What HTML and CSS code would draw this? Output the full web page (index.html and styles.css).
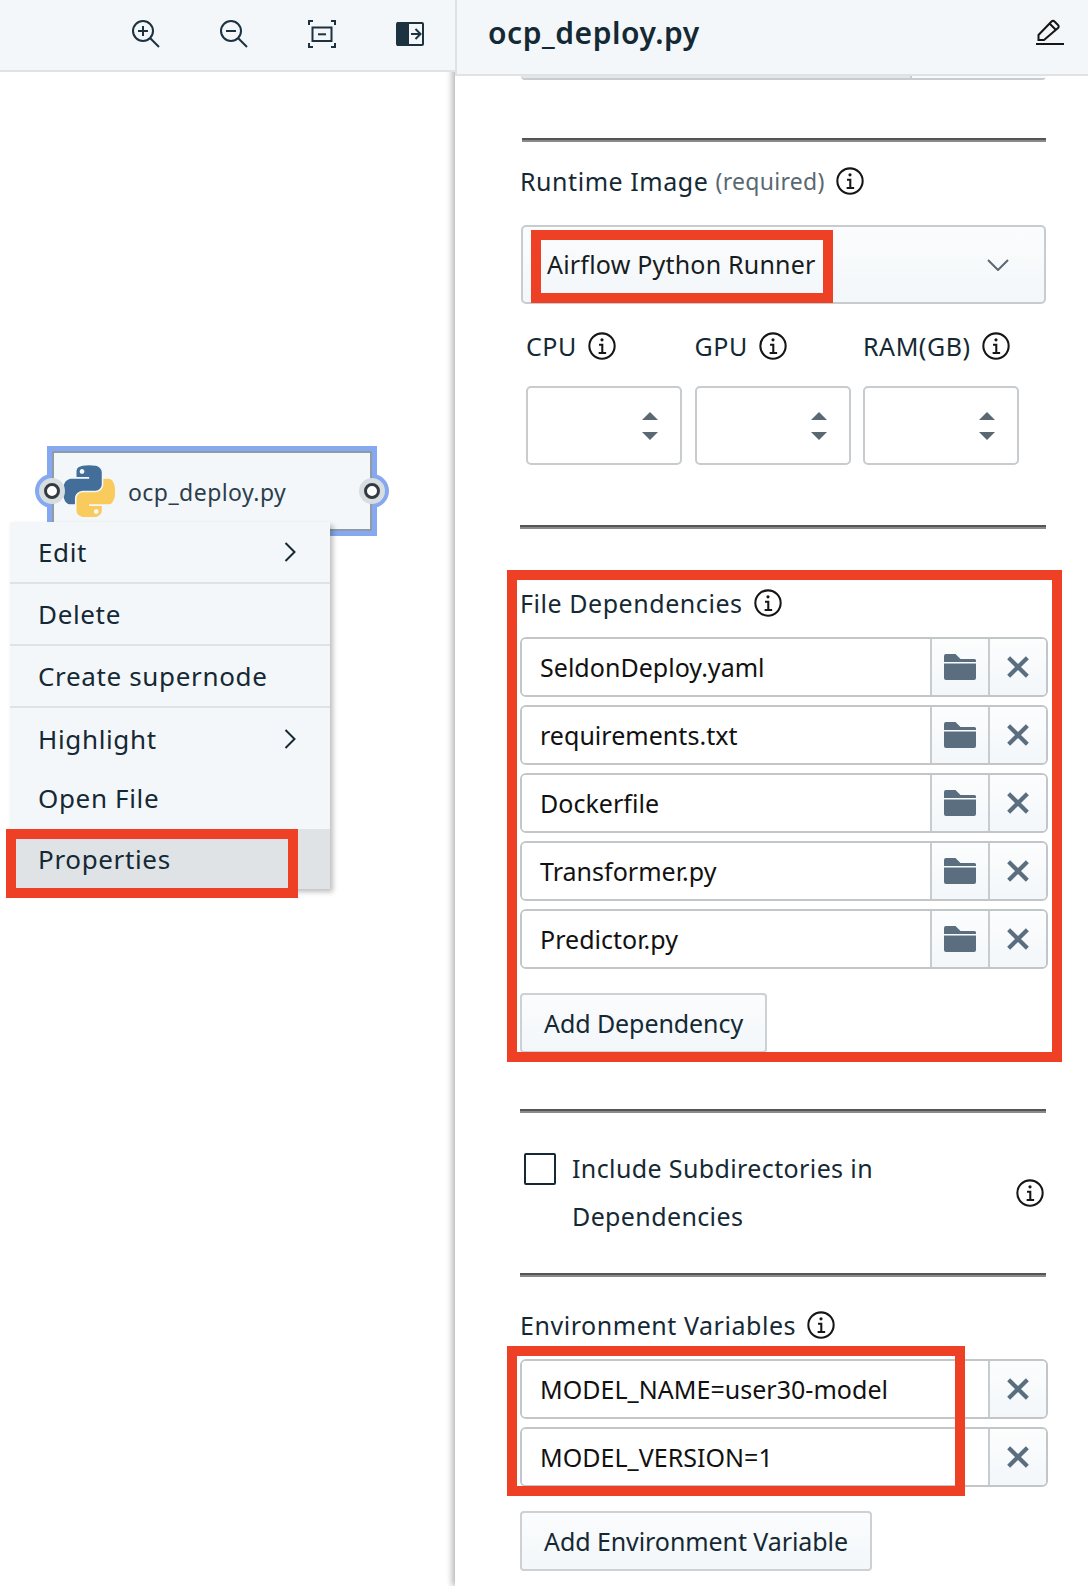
FILE: index.html
```html
<!DOCTYPE html>
<html lang="en">
<head>
<meta charset="utf-8">
<title>ocp_deploy.py</title>
<link rel="stylesheet" href="styles.css">
</head>
<body>
<svg class="defs" width="0" height="0" aria-hidden="true">
  <symbol id="info" viewBox="0 0 16 16">
    <path d="M8.700 11.200V6.800H6.400v1h1.200v3.400H6.200v1h4v-1z"/>
    <circle cx="8" cy="4.700" r=".85"/>
    <path fill-rule="evenodd" d="M8 15.300A7.300 7.300 0 1 1 8 .7a7.300 7.300 0 0 1 0 14.600zM8 1.800a6.200 6.200 0 1 0 0 12.400A6.200 6.200 0 0 0 8 1.800z"/>
  </symbol>
  <symbol id="folder" viewBox="0 0 32 26">
    <path d="M0 2a2 2 0 0 1 2-2h9.500l5 5H30.500A1.500 1.500 0 0 1 32 6.500V8H0z"/>
    <path d="M0 9.500h32V24a2 2 0 0 1-2 2H2a2 2 0 0 1-2-2z"/>
  </symbol>
  <symbol id="close" viewBox="0 0 20 20">
    <path d="M1.500 1.500l17 17M18.500 1.500l-17 17" fill="none" stroke="currentColor" stroke-width="3.800"/>
  </symbol>
  <symbol id="spin" viewBox="0 0 16 28">
    <path d="M8 0l8 8H0zM0 20h16l-8 8z"/>
  </symbol>
  <symbol id="chev-right" viewBox="0 0 12 20">
    <path d="M1.500 1l9 9-9 9" fill="none" stroke="currentColor" stroke-width="2"/>
  </symbol>
</svg>

<div class="app">
  <section class="left">
    <header class="toolbar">
      <svg class="tool" viewBox="0 0 28 28"><circle cx="11" cy="11" r="10"/><path d="M18.500 18.500l8.500 8.500M11 6v10M6 11h10"/></svg>
      <svg class="tool" viewBox="0 0 28 28"><circle cx="11" cy="11" r="10"/><path d="M18.500 18.500l8.500 8.500M6 11h10"/></svg>
      <svg class="tool" viewBox="0 0 28 28"><path d="M1 5V1h4M23 1h4v4M27 23v4h-4M5 27H1v-4"/><rect x="4.500" y="7.500" width="19" height="13.500"/><path d="M10 14.300h8"/></svg>
      <svg class="tool" viewBox="0 0 28 28"><rect class="solid" x="1" y="2" width="12" height="24" rx="1"/><rect x="1" y="3" width="26" height="22" rx="1"/><path d="M15 14h9M19.500 9l5 5-5 5"/></svg>
    </header>
    <div class="canvas">
      <span class="halo halo-left"></span>
      <span class="halo halo-right"></span>
      <div class="node">
        <svg class="python" viewBox="0 0 110.400 109.800">
          <path fill="#436e9a" d="M54.919.001c-4.584.022-8.961.413-12.813 1.095C30.760 3.100 28.700 7.295 28.700 15.032v10.219h26.813v3.406H18.638c-7.793 0-14.616 4.684-16.750 13.594-2.462 10.213-2.571 16.586 0 27.250 1.906 7.938 6.457 13.594 14.250 13.594h9.219v-12.250c0-8.850 7.657-16.656 16.750-16.656h26.781c7.454 0 13.406-6.138 13.406-13.625V15.032c0-7.266-6.130-12.725-13.406-13.937C64.282.328 59.502-.020 54.919.001zM40.419 8.220c2.770 0 5.031 2.299 5.031 5.125 0 2.816-2.262 5.094-5.031 5.094-2.780 0-5.031-2.278-5.031-5.094 0-2.826 2.251-5.125 5.031-5.125z"/>
          <path fill="#f9cb5c" d="M85.638 28.657v11.906c0 9.231-7.826 17-16.750 17H42.106c-7.336 0-13.406 6.278-13.406 13.625v25.531c0 7.266 6.319 11.540 13.406 13.625 8.487 2.496 16.626 2.947 26.781 0 6.750-1.954 13.406-5.888 13.406-13.625V86.501H55.513v-3.406h40.187c7.793 0 10.696-5.436 13.406-13.594 2.799-8.399 2.680-16.476 0-27.250-1.926-7.757-5.604-13.594-13.406-13.594zM70.575 93.313c2.780 0 5.031 2.278 5.031 5.094 0 2.826-2.251 5.125-5.031 5.125-2.770 0-5.031-2.299-5.031-5.125 0-2.816 2.262-5.094 5.031-5.094z"/>
        </svg>
        <span class="node-name">ocp_deploy.py</span>
      </div>
      <span class="ring ring-left"></span>
      <span class="ring ring-right"></span>
      <nav class="menu">
        <div class="menu-item sep">Edit<svg class="chev"><use href="#chev-right"/></svg></div>
        <div class="menu-item sep">Delete</div>
        <div class="menu-item sep">Create supernode</div>
        <div class="menu-item item-highlight">Highlight<svg class="chev"><use href="#chev-right"/></svg></div>
        <div class="menu-item item-open">Open File</div>
        <div class="menu-item active">Properties</div>
        <span class="menu-callout"></span>
      </nav>
    </div>
  </section>

  <aside class="panel">
    <header class="panel-head">
      <h1 class="panel-title">ocp_deploy.py</h1>
      <svg class="pencil" viewBox="0 0 28 26"><path d="M2.500 21v-5L15.500 2.500a2 2 0 0 1 3 0L22 6a2 2 0 0 1 0 3L8 21z"/><path d="M13.500 4.500l6.500 6.500M0 25h28"/></svg>
    </header>
    <div class="panel-body">
      <div class="clipped-row"><span class="clipped-end"></span></div>
      <hr class="rule rule-first">

      <div class="label label-runtime">Runtime Image <span class="muted">(required)</span><svg class="info"><use href="#info"/></svg></div>
      <div class="select">
        <span class="select-value">Airflow Python Runner</span>
        <svg class="select-chev" viewBox="0 0 22 12"><path d="M1 1l10 10L21 1"/></svg>
      </div>

      <div class="resources">
        <div class="resource">
          <div class="label">CPU<svg class="info"><use href="#info"/></svg></div>
          <div class="number"><svg class="spin"><use href="#spin"/></svg></div>
        </div>
        <div class="resource">
          <div class="label">GPU<svg class="info"><use href="#info"/></svg></div>
          <div class="number"><svg class="spin"><use href="#spin"/></svg></div>
        </div>
        <div class="resource">
          <div class="label">RAM(GB)<svg class="info"><use href="#info"/></svg></div>
          <div class="number"><svg class="spin"><use href="#spin"/></svg></div>
        </div>
      </div>

      <hr class="rule rule-second">

      <div class="deps">
        <div class="label label-deps">File Dependencies<svg class="info"><use href="#info"/></svg></div>
        <div class="rows">
          <div class="row"><span class="value">SeldonDeploy.yaml</span><span class="cell"><svg class="folder"><use href="#folder"/></svg></span><span class="cell"><svg class="x"><use href="#close"/></svg></span></div>
          <div class="row"><span class="value">requirements.txt</span><span class="cell"><svg class="folder"><use href="#folder"/></svg></span><span class="cell"><svg class="x"><use href="#close"/></svg></span></div>
          <div class="row"><span class="value">Dockerfile</span><span class="cell"><svg class="folder"><use href="#folder"/></svg></span><span class="cell"><svg class="x"><use href="#close"/></svg></span></div>
          <div class="row"><span class="value">Transformer.py</span><span class="cell"><svg class="folder"><use href="#folder"/></svg></span><span class="cell"><svg class="x"><use href="#close"/></svg></span></div>
          <div class="row"><span class="value">Predictor.py</span><span class="cell"><svg class="folder"><use href="#folder"/></svg></span><span class="cell"><svg class="x"><use href="#close"/></svg></span></div>
        </div>
        <div class="button button-deps">Add Dependency</div>
        <span class="deps-callout"></span>
      </div>

      <hr class="rule rule-third">

      <div class="check">
        <span class="box"></span>
        <span class="check-text">Include Subdirectories in Dependencies</span>
        <svg class="info"><use href="#info"/></svg>
      </div>

      <hr class="rule rule-fourth">

      <div class="label label-env">Environment Variables<svg class="info"><use href="#info"/></svg></div>
      <div class="rows rows-env">
        <div class="row"><span class="value">MODEL_NAME=user30-model</span><span class="cell"><svg class="x"><use href="#close"/></svg></span></div>
        <div class="row"><span class="value">MODEL_VERSION=1</span><span class="cell"><svg class="x"><use href="#close"/></svg></span></div>
        <span class="env-callout"></span>
      </div>
      <div class="button button-env">Add Environment Variable</div>
    </div>
  </aside>
</div>
</body>
</html>
```
FILE: styles.css
```css
* { box-sizing: border-box; }

html, body {
  margin: 0;
  padding: 0;
  height: 1586px;
  overflow: hidden;
  background: #fff;
}

body {
  font-family: "Noto Sans", "Open Sans", sans-serif;
  font-size: 25px;
  color: #152935;
}

.defs { position: absolute; }

.app {
  display: grid;
  grid-template-columns: 455px 633px;
  height: 1586px;
}

/* left: toolbar and canvas */
.left { display: flex; flex-direction: column; min-width: 0; }

.toolbar {
  position: relative;
  z-index: 2;
  height: 72px;
  flex: none;
  padding: 0 31px 2px 0;
  display: flex;
  justify-content: flex-end;
  align-items: center;
  gap: 60px;
  background: #f3f7fa;
  border-bottom: 2px solid #dfe3e6;
}

.tool {
  width: 28px;
  height: 28px;
  fill: none;
  stroke: #1d3240;
  stroke-width: 2;
}

.tool .solid { fill: #1d3240; stroke: none; }

.canvas { position: relative; flex: 1; background: #fff; }

.halo {
  position: absolute;
  top: 402px;
  width: 34px;
  height: 34px;
  border-radius: 50%;
  background: #85a8f0;
}

.halo-left { left: 35px; }
.halo-right { left: 355px; }

.node {
  position: absolute;
  left: 47px;
  top: 374px;
  width: 330px;
  height: 90px;
  padding: 14px 0 0 11px;
  display: flex;
  align-items: flex-start;
  gap: 13px;
  background: #f3f7fa;
  border: 5px solid #85a8f0;
  outline: 2px solid #8f9ca5;
  outline-offset: -7px;
}

.python { width: 52px; height: 52px; flex: none; }

.node-name {
  font-size: 23px;
  line-height: 32px;
  margin-top: 11px;
  letter-spacing: .45px;
  color: #2c3e4c;
}

.ring {
  position: absolute;
  top: 411px;
  width: 16px;
  height: 16px;
  border-radius: 50%;
  background: #fff;
  border: 3px solid #333b42;
  box-shadow: 0 0 0 5px #d8dde0;
}

.ring-left { left: 44px; }
.ring-right { left: 364px; }

.menu {
  position: absolute;
  left: 10px;
  top: 450px;
  width: 320px;
  background: #f3f7fa;
  box-shadow: 3px 3px 5px rgba(0, 0, 0, .25);
}

.menu-item {
  height: 62px;
  padding: 0 34px 0 28px;
  display: flex;
  align-items: center;
  justify-content: space-between;
  font-size: 26px;
  line-height: 32px;
  letter-spacing: .65px;
}

.sep { border-bottom: 2px solid #dfe3e6; }

.item-highlight { height: 61px; }
.item-open { height: 60px; padding-bottom: 2px; }
.menu-item.active { height: 60px; background: #dfe3e6; }

.chev { width: 12px; height: 20px; color: #152935; }

.menu-callout {
  position: absolute;
  left: -4px;
  top: 307px;
  width: 292px;
  height: 69px;
  border: 10px solid #ee4025;
}

/* right: properties panel */
.panel {
  position: relative;
  z-index: 1;
  min-width: 0;
  background: #fff;
  box-shadow: -3px 0 6px rgba(0, 0, 0, .28);
}

.panel-head {
  position: relative;
  z-index: 1;
  height: 76px;
  padding: 0 24px 8px 31px;
  display: flex;
  align-items: center;
  justify-content: space-between;
  background: #f3f7fa;
  border-left: 2px solid #dfe3e6;
  border-bottom: 2px solid #dfe3e6;
}

.panel-title {
  margin: 0;
  font-size: 30px;
  line-height: 40px;
  font-weight: 600;
  letter-spacing: .55px;
}

.pencil {
  width: 28px;
  height: 26px;
  fill: none;
  stroke: #161616;
  stroke-width: 2;
  margin-top: -3px;
}

.panel-body { padding: 0 42px 0 66px; }

.clipped-row {
  height: 4px;
  display: flex;
  justify-content: flex-end;
  background: #e4e7e9;
  border-bottom: 2px solid #c8ccce;
  border-radius: 0 0 5px 5px;
}

.clipped-end { width: 136px; background: #f8fafb; border-left: 2px solid #c8ccce; }

.rule {
  height: 4px;
  margin: 0;
  border: 0;
  border-top: 2px solid #555;
  border-bottom: 2px solid #8a8a8a;
}

.rule-first { margin: 58px 0 0 1px; }
.rule-second { margin: 60px 0 0 -1px; }
.rule-third { margin: 56px 0 0 -1px; }
.rule-fourth { margin: 32px 0 0 -1px; }

.label {
  height: 32px;
  display: flex;
  align-items: center;
  font-size: 25px;
  line-height: 32px;
  letter-spacing: .55px;
  white-space: pre;
}

.label-runtime { margin: 23px 0 0 -1px; }
.label-deps { margin-left: -1px; }
.label-env { margin: 32px 0 0 -1px; }
.muted { color: #5a6872; font-size: 23px; letter-spacing: .3px; }

.info {
  width: 30px;
  height: 30px;
  flex: none;
  margin-left: 10px;
  fill: #161616;
}

.select {
  height: 79px;
  margin-top: 28px;
  padding-left: 8px;
  display: flex;
  align-items: flex-start;
  justify-content: space-between;
  background: linear-gradient(#fbfcfd, #f3f7fa);
  border: 2px solid #c8ccce;
  border-radius: 5px;
}

.select-value {
  width: 302px;
  height: 73px;
  margin-top: 3px;
  padding: 0 0 6px 6px;
  display: flex;
  align-items: center;
  border: 10px solid #ee4025;
  color: #171c21;
  letter-spacing: .2px;
  white-space: nowrap;
}

.select-chev {
  width: 22px;
  height: 12px;
  margin: 32px 35px 0 0;
  fill: none;
  stroke: #5a6872;
  stroke-width: 2;
}

.resources {
  margin: 26px 0 0 5px;
  display: grid;
  grid-template-columns: repeat(3, 156px);
  column-gap: 12.500px;
}

.number {
  height: 79px;
  margin-top: 24px;
  padding: 24px 22px 0 0;
  display: flex;
  justify-content: flex-end;
  align-items: flex-start;
  background: #fff;
  border: 2px solid #c8ccce;
  border-radius: 5px;
}

.spin { width: 16px; height: 28px; fill: #5a6872; }

.deps { position: relative; margin-top: 58px; }

.deps-callout {
  position: absolute;
  left: -14px;
  right: -16px;
  top: -17px;
  bottom: -9px;
  border: 10px solid #ee4025;
}

.rows {
  margin: 18px -2px 0 -1px;
  display: flex;
  flex-direction: column;
  gap: 8px;
}

.rows-env { position: relative; }

.env-callout {
  position: absolute;
  left: -13px;
  top: -13px;
  bottom: -9px;
  width: 458px;
  border: 10px solid #ee4025;
}

.row {
  height: 60px;
  display: flex;
  overflow: hidden;
  border: 2px solid #c3c6c8;
  border-radius: 6px;
}

.value {
  flex: 1;
  padding-left: 18px;
  display: flex;
  align-items: center;
  background: #fff;
  color: #111;
  padding-bottom: 1px;
  letter-spacing: .03px;
}

.cell {
  width: 58px;
  flex: none;
  display: flex;
  align-items: center;
  justify-content: center;
  background: linear-gradient(#fcfdfd, #f3f7fa);
  border-left: 2px solid #c8ccce;
}

.folder { width: 32px; height: 26px; fill: #5a6e80; }
.x { width: 22px; height: 22px; color: #5a6e80; margin-top: -1px; }

.button {
  height: 60px;
  margin-left: -1px;
  width: fit-content;
  padding: 0 22px;
  display: flex;
  align-items: center;
  background: linear-gradient(#fbfcfd, #f3f7fa);
  border: 2px solid #cdd1d4;
  border-radius: 4px;
  letter-spacing: -.08px;
}

.button-deps { margin-top: 24px; }
.button-env { margin-top: 24px; }

.check {
  margin: 32px 0 0 3px;
  display: flex;
  align-items: center;
}

.box {
  width: 32px;
  height: 32px;
  flex: none;
  align-self: flex-start;
  margin-top: 8px;
  border: 2px solid #152935;
  border-radius: 2px;
}

.check-text {
  flex: 1;
  margin: -1px 0 1px;
  padding: 0 90px 0 16px;
  line-height: 48px;
  letter-spacing: .38px;
}

.check .info { margin-right: 1px; }
```
